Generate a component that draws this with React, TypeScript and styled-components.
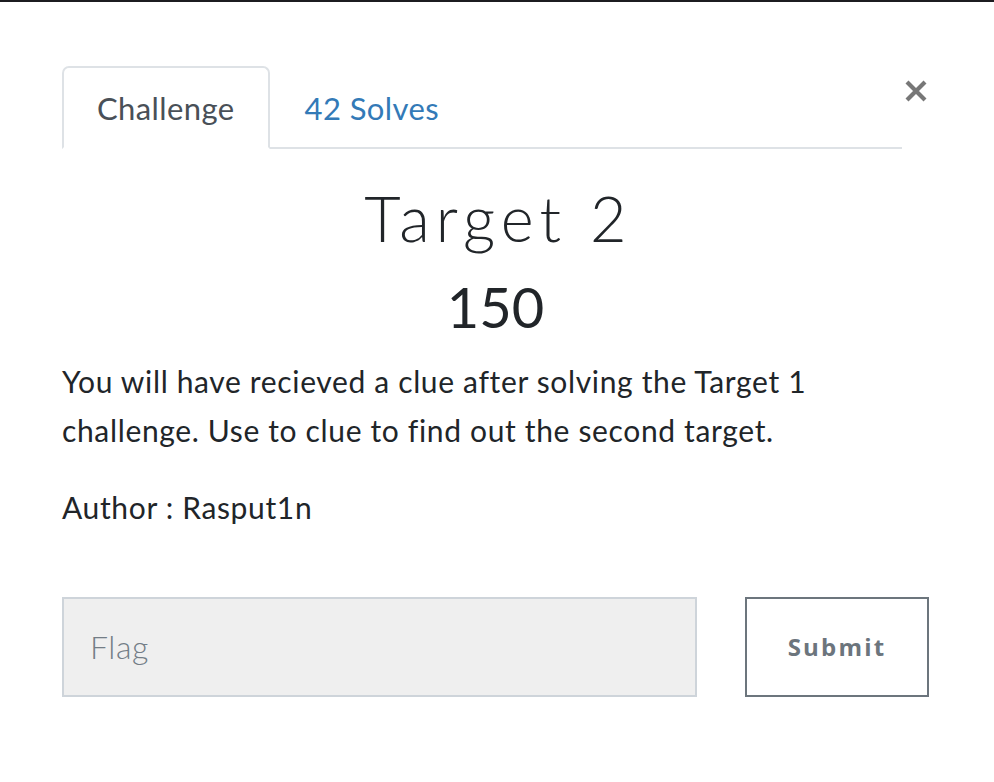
import React from "react";
import styled, { createGlobalStyle } from "styled-components";

const Global = createGlobalStyle`
  html, body { margin: 0; padding: 0; background: #ffffff; }
  body { font-family: "Lato", "Liberation Sans", sans-serif; color: #212529; }
  * { box-sizing: border-box; }
`;

const Backdrop = styled.div`
  height: 2px;
  background: #1c1c20;
`;

const Modal = styled.div`
  width: 867px;
  margin-left: 62px;
  display: flex;
  flex-direction: column;
`;

const Header = styled.div`
  display: flex;
  align-items: flex-start;
  margin-top: 64px;
`;

const Nav = styled.div`
  flex: 1;
  display: flex;
  border-bottom: 2px solid #dee2e6;
`;

const Tab = styled.div<{ $active?: boolean }>`
  height: 83px;
  margin-bottom: -2px;
  padding: 0 33px;
  display: flex;
  align-items: center;
  font-size: 31px;
  letter-spacing: 0.4px;
  color: ${(p) => (p.$active ? "#495057" : "#337ab7")};
  border: 2px solid ${(p) => (p.$active ? "#dee2e6" : "transparent")};
  border-bottom-color: ${(p) => (p.$active ? "#ffffff" : "transparent")};
  border-radius: 7px 7px 0 0;
  background: ${(p) => (p.$active ? "#ffffff" : "transparent")};
`;

const Close = styled.button`
  width: 27px;
  margin-top: 13px;
  padding: 0;
  border: none;
  background: none;
  display: flex;
  justify-content: center;
`;

const Title = styled.h3`
  margin: 31px 0 0;
  padding-left: 6px;
  text-align: center;
  font-family: "Lato", sans-serif;
  font-weight: 300;
  font-size: 63px;
  line-height: 1.2;
  letter-spacing: 6px;
  color: #212529;
`;

const Value = styled.h4`
  margin: 17px 0 0;
  text-align: center;
  font-weight: 400;
  font-size: 56px;
  line-height: 1.2;
  color: #212529;
`;

const Text = styled.p<{ $top: number }>`
  margin: ${(p) => p.$top}px 0 0;
  font-size: 30px;
  letter-spacing: 0.65px;
  line-height: 49px;
  color: #212529;
`;

const Form = styled.form`
  display: flex;
  gap: 48px;
  margin-top: 65px;
`;

const Input = styled.input`
  flex: 1;
  height: 100px;
  padding: 0 26px;
  border: 2px solid #ced4da;
  background: #efefef;
  font-family: "Lato", sans-serif;
  font-weight: 300;
  font-size: 32px;
  letter-spacing: 0.6px;
  color: #495057;
  outline: none;
  &::placeholder { color: #737d86; }
`;

const Submit = styled.button`
  width: 184px;
  height: 100px;
  border: 2px solid #6c757d;
  background: #fff;
  font-family: "Open Sans", sans-serif;
  font-weight: 700;
  font-size: 24px;
  letter-spacing: 2.2px;
  color: #6c757d;
`;

export default function App() {
  return (
    <>
      <Global />
      <Backdrop />
      <Modal>
        <Header>
          <Nav>
            <Tab $active>Challenge</Tab>
            <Tab>42 Solves</Tab>
          </Nav>
          <Close aria-label="Close">
            <svg width="24" height="24" viewBox="0 0 24 24">
              <path d="M3 3 L21 21 M21 3 L3 21" stroke="#777" strokeWidth="4.2" strokeLinecap="butt" />
            </svg>
          </Close>
        </Header>
        <Title>Target 2</Title>
        <Value>150</Value>
        <Text $top={17}>
          You will have recieved a clue after solving the Target 1 challenge. Use to clue to find out the second target.
        </Text>
        <Text $top={28}>Author : Rasput1n</Text>
        <Form onSubmit={(e) => e.preventDefault()}>
          <Input placeholder="Flag" />
          <Submit type="submit">Submit</Submit>
        </Form>
      </Modal>
    </>
  );
}
